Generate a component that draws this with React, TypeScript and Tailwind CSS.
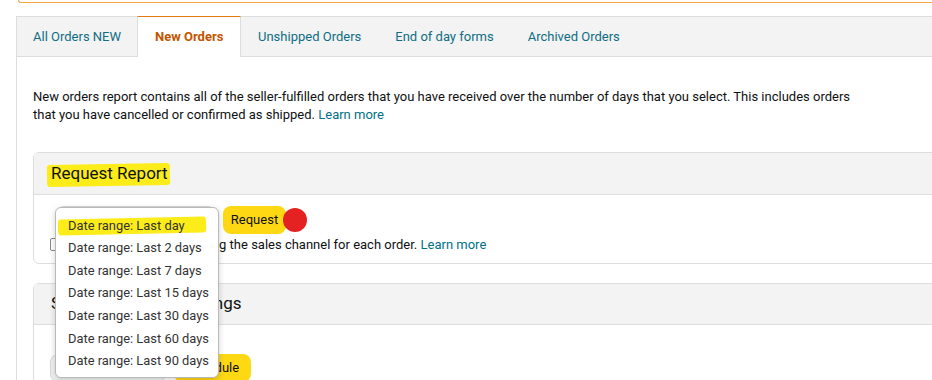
import React from 'react'

const tabs = ['All Orders NEW', 'New Orders', 'Unshipped Orders', 'End of day forms', 'Archived Orders']

const ranges = [
  'Date range: Last day',
  'Date range: Last 2 days',
  'Date range: Last 7 days',
  'Date range: Last 15 days',
  'Date range: Last 30 days',
  'Date range: Last 60 days',
  'Date range: Last 90 days',
]

const Marker = ({ className }: { className: string }) => (
  <span className={`absolute bg-[#fbec1a] rounded-[3px] ${className}`} />
)

const App = () => {
  return (
    <div className="relative w-[932px] h-[380px] overflow-hidden bg-white text-[13px] text-[#0f1111]" style={{ fontFamily: 'Roboto, "Liberation Sans", sans-serif' }}>
      {/* bottom of the alert box above */}
      <div className="ml-[18px] h-[3px] border-b border-l border-[#f5a742] rounded-bl-[4px]" />

      {/* tabs */}
      <div className="mt-[13px] ml-4 w-[1000px] flex h-[41px] bg-[#f3f3f3] border border-[#dddddd]">
        {tabs.map((t, i) =>
          t === 'New Orders' ? (
            <div key={t} className="-mt-px -mb-px h-[41px] w-[104px] pl-[17px] flex items-center bg-white border-t border-t-[#e47911] border-x border-x-[#dddddd] font-bold text-[#c45500]">
              {t}
            </div>
          ) : (
            <div key={t} className={`flex items-center text-[#0f6e84] ${i === 0 ? 'w-[120px] pl-4' : 'px-[17px]'}`}>
              {t}
            </div>
          )
        )}
      </div>

      {/* content */}
      <div className="ml-4 w-[1000px] h-[400px] border-l border-[#dddddd] pl-4 pt-[31px]">
        <p className="leading-[18px] w-[830px]">
          New orders report contains all of the seller-fulfilled orders that you have received over the number of days that you select. This includes orders that you have cancelled or confirmed as shipped.{' '}
          <span className="text-[#007185]">Learn more</span>
        </p>

        {/* request report */}
        <div className="mt-[28px] border border-[#dddddd] rounded-tl-[6px] rounded-bl-[6px]">
          <div className="h-[42px] bg-[#f3f3f3] border-b border-[#dddddd] px-[17px] flex items-center">
            <span className="relative text-[17px]">
              <Marker className="-left-[4px] -right-[2px] top-[3px] bottom-[1px] -rotate-1" />
              <span className="relative">Request Report</span>
            </span>
          </div>
          <div className="h-[68px] px-4 pt-[11px]">
            <div className="flex items-center">
              <div className="ml-[6px] w-[160px] h-[28px] rounded-lg bg-[#f0f2f2] border border-[#d5d9d9]" />
              <div className="ml-[7px] flex items-center">
                <div className="h-[28px] w-[63px] rounded-lg bg-[#ffd814] flex items-center justify-center">Request</div>
                <div className="-ml-[3px] w-[24px] h-[24px] rounded-full bg-[#e52222]" />
              </div>
            </div>
            <div className="mt-[1px] flex items-center gap-[5px]">
              <div className="w-[11px] h-[13px] border border-[#888] rounded-[2px] bg-white" />
              <span>
                Include a column displaying the sales channel for each order.{' '}
                <span className="text-[#007185]">Learn more</span>
              </span>
            </div>
          </div>
        </div>

        {/* schedule */}
        <div className="mt-[19px] border border-[#dddddd] rounded-tl-[6px]">
          <div className="h-[41px] bg-[#f3f3f3] border-b border-[#dddddd] px-[17px] flex items-center">
            <span className="text-[17px]">Schedule Report Settings</span>
          </div>
          <div className="h-[80px] px-4 pt-[29px]">
            <div className="flex items-center gap-2">
              <div className="w-[116px] h-[28px] rounded-lg bg-[#f0f2f2] border border-[#d5d9d9]" />
              <div className="h-[28px] px-[12px] rounded-lg bg-[#ffd814] flex items-center">Schedule</div>
            </div>
          </div>
        </div>
      </div>

      {/* open select list */}
      <div
        className="absolute left-[55px] top-[207px] w-[164px] h-[171px] bg-white border border-[#b9b9b9] rounded-[6px] shadow-[0_2px_6px_rgba(0,0,0,0.18)] pt-[6px] text-[12.9px] text-[#333]"
        style={{ fontFamily: 'Roboto, "Noto Sans", sans-serif' }}
      >
        {ranges.map((r, i) => (
          <div key={r} className="relative h-[22.6px] pl-3 flex items-center whitespace-nowrap">
            {i === 0 && <Marker className="left-[2px] right-[12px] top-[4px] bottom-[3px] rotate-[-1.2deg]" />}
            <span className="relative">{r}</span>
          </div>
        ))}
      </div>
    </div>
  )
}

export default App
